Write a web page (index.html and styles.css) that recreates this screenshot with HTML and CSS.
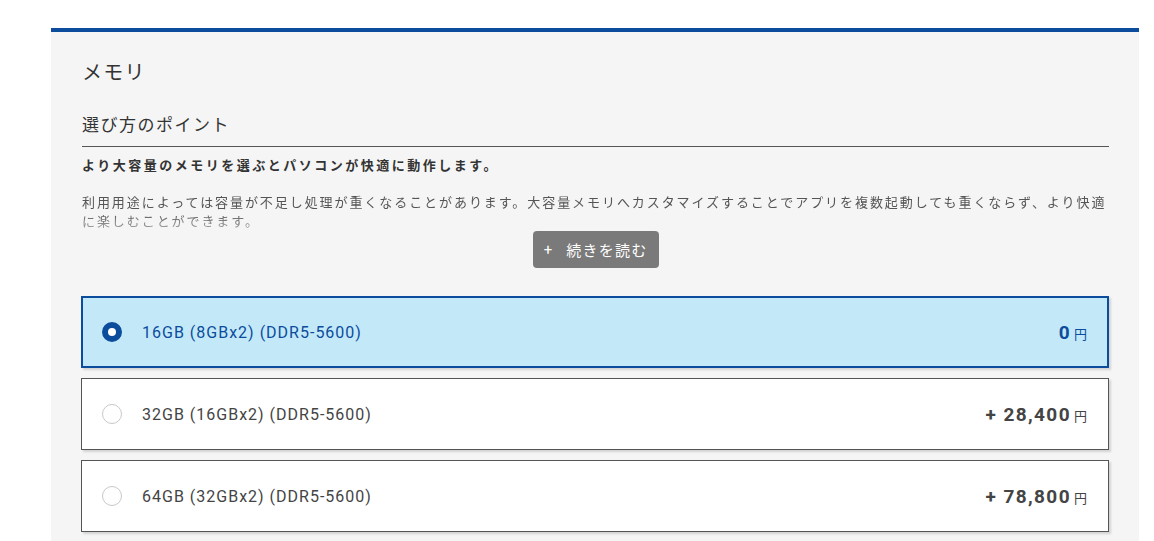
FILE: index.html
```html
<!DOCTYPE html>
<html lang="ja">
<head>
<meta charset="utf-8">
<title>メモリ</title>
<link rel="stylesheet" href="styles.css">
</head>
<body>
<section class="panel">
  <h1 class="panel-title">メモリ</h1>
  <div class="guide">
    <h2 class="guide-title">選び方のポイント</h2>
    <p class="guide-lead">より大容量のメモリを選ぶとパソコンが快適に動作します。</p>
    <p class="guide-text">利用用途によっては容量が不足し処理が重くなることがあります。大容量メモリへカスタマイズすることでアプリを複数起動しても重くならず、より快適に楽しむことができます。</p>
    <div class="more-wrap"><button class="more-btn"><span class="more-plus">+</span>続きを読む</button></div>
  </div>
  <div class="options">
    <label class="option is-selected">
      <span class="radio"></span>
      <span class="option-name">16GB (8GBx2) (DDR5-5600)</span>
      <span class="option-price"><span class="num">0</span><span class="yen">円</span></span>
    </label>
    <label class="option">
      <span class="radio"></span>
      <span class="option-name">32GB (16GBx2) (DDR5-5600)</span>
      <span class="option-price"><span class="num">+ 28,400</span><span class="yen">円</span></span>
    </label>
    <label class="option">
      <span class="radio"></span>
      <span class="option-name">64GB (32GBx2) (DDR5-5600)</span>
      <span class="option-price"><span class="num">+ 78,800</span><span class="yen">円</span></span>
    </label>
  </div>
</section>
</body>
</html>
```
FILE: styles.css
```css
* { box-sizing: border-box; }
html, body { margin: 0; padding: 0; background: #fff; }
body {
  font-family: Roboto, "Noto Sans CJK JP", sans-serif;
  color: #333;
}
.panel {
  margin: 28px 0 0 51px;
  width: 1088px;
  background: #f5f5f5;
  border-top: 4px solid #0b4c9c;
  padding: 26px 30px 20px 31px;
}
.panel-title {
  margin: 0;
  font-size: 20px;
  line-height: 30px;
  font-weight: 400;
  letter-spacing: 1.3px;
  color: #333;
}
.guide { margin-top: 24px; }
.guide-title {
  margin: 0;
  font-size: 17px;
  line-height: 26px;
  font-weight: 400;
  letter-spacing: 1.5px;
  color: #333;
  padding-bottom: 8px;
  border-bottom: 1px solid #555;
}
.guide-lead {
  margin: 9px 0 0;
  font-size: 13px;
  line-height: 20px;
  font-weight: 700;
  letter-spacing: 2.5px;
  color: #333;
}
.guide-text {
  margin: 17px 0 0;
  font-size: 13px;
  line-height: 19px;
  letter-spacing: 1.93px;
  color: #555;
  -webkit-mask-image: linear-gradient(to bottom, #000 0, #000 19px, rgba(0,0,0,0.45) 38px);
  mask-image: linear-gradient(to bottom, #000 0, #000 19px, rgba(0,0,0,0.45) 38px);
}
.more-wrap {
  display: flex;
  justify-content: center;
}
.more-btn {
  width: 126px;
  height: 37px;
  border: 0;
  border-radius: 4px;
  background: #7a7a7a;
  color: #fff;
  font-family: Roboto, "Noto Sans CJK JP", sans-serif;
  font-size: 15px;
  letter-spacing: 1.2px;
  padding: 0;
  display: flex;
  align-items: center;
  justify-content: center;
}
.more-plus { margin-right: 13px; }
.options {
  margin: 28px 0 0 -1px;
  display: flex;
  flex-direction: column;
  gap: 10px;
}
.option {
  height: 72px;
  display: flex;
  align-items: center;
  background: #fff;
  border: 1px solid #555;
  box-shadow: 2px 2px 2px rgba(0,0,0,0.14);
  padding: 0 21px 0 20px;
}
.option.is-selected {
  background: #c3e9f9;
  border: 2px solid #0b4c9c;
  padding: 0 20px 0 19px;
}
.radio {
  width: 20px;
  height: 20px;
  border-radius: 50%;
  border: 1px solid #c8c8c8;
  background: #fff;
  flex: none;
}
.is-selected .radio {
  border: 6.5px solid #0b4c9c;
}
.option-name {
  margin-left: 20px;
  font-size: 16px;
  letter-spacing: 1px;
  color: #444;
  flex: 1;
}
.is-selected .option-name { color: #0b4c9c; }
.option-price {
  display: flex;
  align-items: baseline;
  color: #444;
}
.is-selected .option-price { color: #0b4c9c; }
.num {
  font-size: 19px;
  font-weight: 700;
  letter-spacing: 1.4px;
}
.yen {
  font-size: 13px;
  margin-left: 3px;
}
```
